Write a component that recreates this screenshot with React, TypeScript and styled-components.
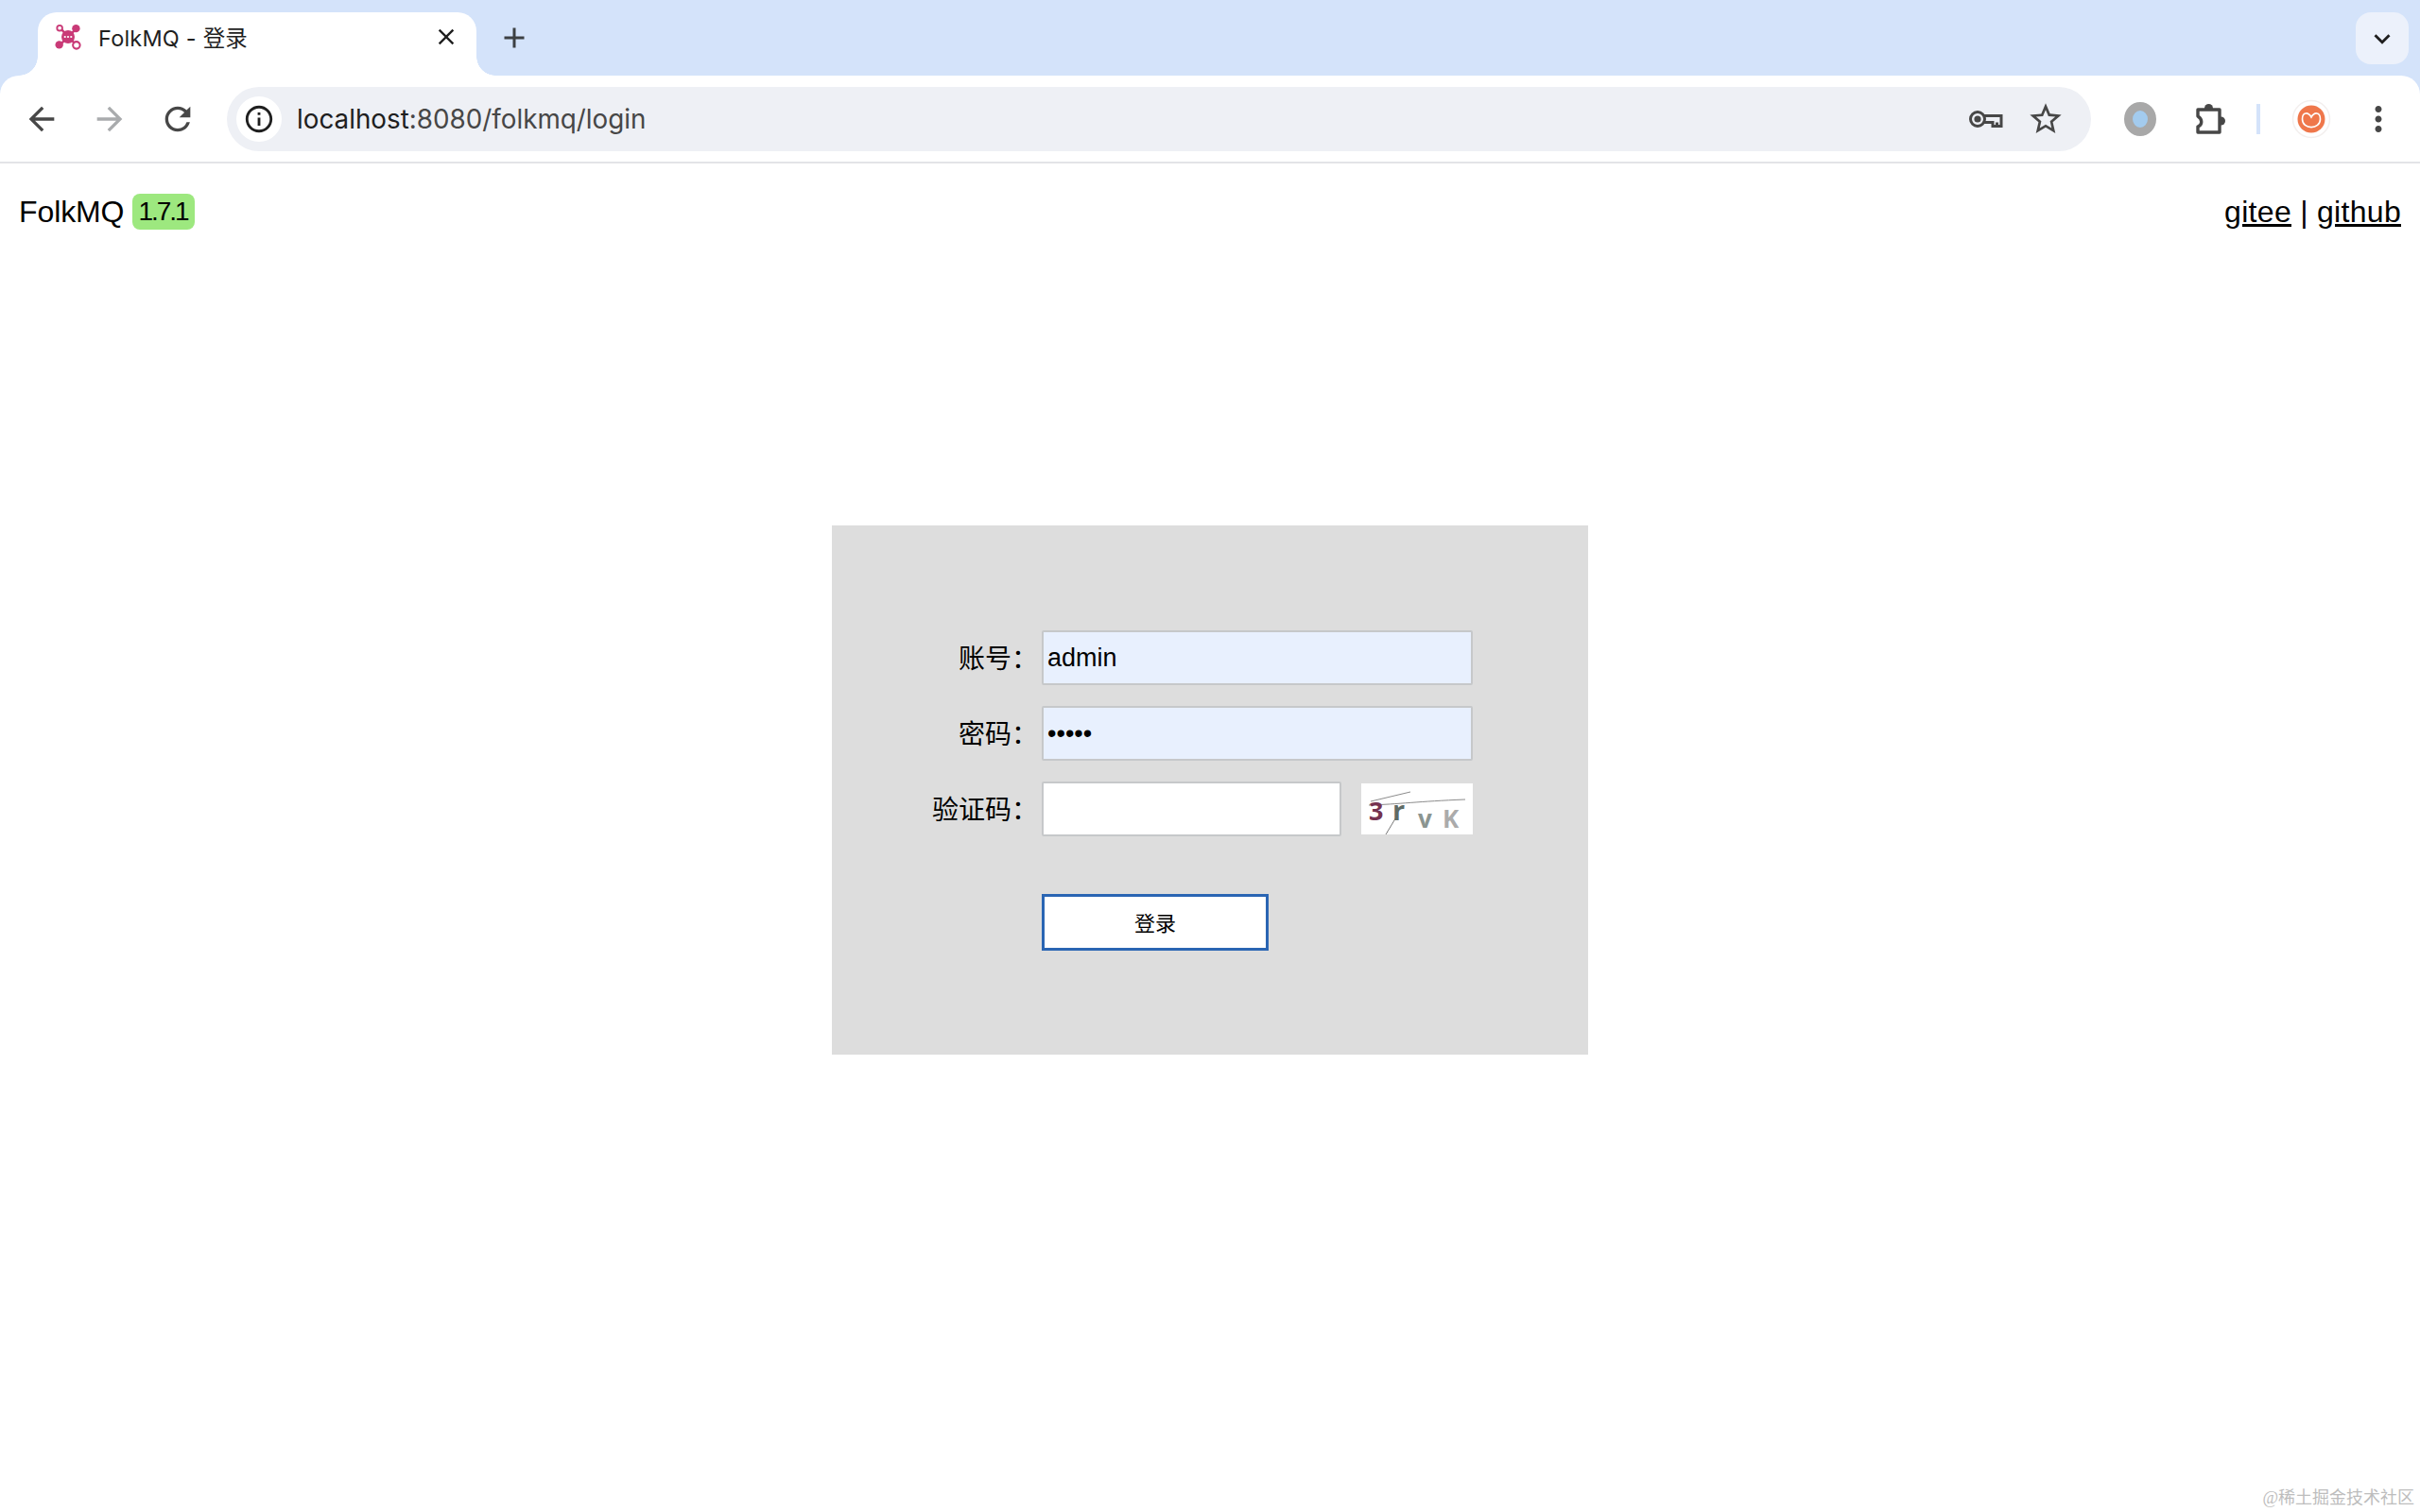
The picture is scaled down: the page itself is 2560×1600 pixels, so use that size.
import React from "react";
import styled, { createGlobalStyle } from "styled-components";
import {
  MdAdd,
  MdArrowBack,
  MdArrowForward,
  MdClose,
  MdKeyboardArrowDown,
  MdMoreVert,
  MdOutlineInfo,
  MdRefresh,
  MdStarBorder,
} from "react-icons/md";

const CJK = `"Noto Sans CJK SC"`;
const FRAME = "#d4e3fa";

const GlobalStyle = createGlobalStyle`
  html, body {
    margin: 0;
    padding: 0;
    background: #fff;
  }
  body {
    font-family: "Liberation Sans", ${CJK}, sans-serif;
    color: #000;
  }
  * {
    box-sizing: border-box;
  }
`;

const Window = styled.div`
  position: relative;
  width: 2560px;
  height: 1600px;
  overflow: hidden;
  background: #fff;
`;

// === Browser chrome ===

const TabStrip = styled.div`
  display: flex;
  align-items: flex-end;
  height: 80px;
  padding-left: 40px;
  padding-right: 12px;
  background: ${FRAME};
`;

const Tab = styled.div`
  position: relative;
  display: flex;
  align-items: center;
  width: 464px;
  height: 67px;
  padding: 0 18px 16px 18px;
  background: #fff;
  border-radius: 20px 20px 0 0;
  font-family: Inter, ${CJK}, sans-serif;
  font-size: 23.5px;
  color: #1f1f1f;

  &::before,
  &::after {
    content: "";
    position: absolute;
    bottom: 0;
    width: 20px;
    height: 20px;
    background: radial-gradient(circle at var(--cx) 0, ${FRAME} 19.5px, #fff 20px);
  }
  &::before {
    --cx: 0;
    left: -20px;
  }
  &::after {
    --cx: 100%;
    right: -20px;
  }
`;

const Favicon = styled.svg`
  flex: none;
  width: 28px;
  height: 28px;
  margin-right: 18px;
`;

const TabTitle = styled.span`
  flex: 1;
  letter-spacing: 0.2px;
  white-space: nowrap;
`;

const TabClose = styled(MdClose)`
  flex: none;
  width: 28px;
  height: 28px;
  color: #1f1f1f;
`;

const NewTab = styled(MdAdd)`
  width: 36px;
  height: 36px;
  margin: 0 0 22px 22px;
  color: #3c4043;
`;

const TabSearch = styled.div`
  display: flex;
  align-items: center;
  justify-content: center;
  width: 56px;
  height: 55px;
  margin: 0 0 12px auto;
  border-radius: 16px;
  background: #ecf1fb;
  color: #1f1f1f;
  font-size: 34px;
`;

const ToolbarBack = styled.div`
  background: ${FRAME};
`;

const Toolbar = styled.div`
  display: flex;
  align-items: center;
  height: 93px;
  padding: 0 8px;
  background: #fff;
  border-bottom: 2px solid #e3e4e7;
  border-radius: 20px 20px 0 0;
`;

const NavButton = styled.div<{ $muted?: boolean }>`
  flex: none;
  display: flex;
  align-items: center;
  justify-content: center;
  width: 72px;
  font-size: 40px;
  color: ${(p) => (p.$muted ? "#a9abad" : "#474747")};
`;

const Omnibox = styled.div`
  flex: none;
  display: flex;
  align-items: center;
  width: 1972px;
  height: 68px;
  margin-left: 16px;
  padding: 0 16px 0 10px;
  border-radius: 34px;
  background: #eef0f5;
`;

const InfoChip = styled.div`
  flex: none;
  display: flex;
  align-items: center;
  justify-content: center;
  width: 48px;
  height: 48px;
  border-radius: 50%;
  background: #fff;
  color: #1f1f1f;
  font-size: 34px;
`;

const Url = styled.span`
  flex: 1;
  margin-left: 16px;
  font-family: Inter, sans-serif;
  font-size: 27.8px;
  color: #1f1f1f;
`;

const UrlRest = styled.span`
  color: #474747;
`;

const OmniAction = styled.div`
  flex: none;
  display: flex;
  align-items: center;
  justify-content: center;
  width: 64px;
  font-size: 40px;
  color: #474747;
`;

const KeyIcon = styled.svg`
  width: 40px;
  height: 40px;
`;

const ToolSlot = styled.div<{ $width: number }>`
  flex: none;
  display: flex;
  align-items: center;
  justify-content: center;
  width: ${(p) => p.$width}px;
  font-size: 42px;
  color: #474747;
`;

const ExtensionDot = styled.div`
  width: 34px;
  height: 36px;
  border: 9px solid #a8a8a8;
  border-radius: 50%;
  background: #a3cbee;
`;

const Puzzle = styled.svg`
  flex: none;
  width: 40px;
  height: 42px;
`;

const Divider = styled.div`
  width: 4px;
  height: 32px;
  background: ${FRAME};
`;

const Avatar = styled.svg`
  flex: none;
  width: 46px;
  height: 46px;
`;

// === Page ===

const PageHeader = styled.header`
  display: flex;
  align-items: center;
  justify-content: space-between;
  height: 104px;
  padding: 0 20px 2px;
  font-size: 32px;
`;

const Brand = styled.div`
  display: flex;
  align-items: center;
  gap: 9px;
  letter-spacing: -0.1px;
`;

const Version = styled.span`
  display: inline-block;
  padding: 5px 7px 5px 6px;
  border-radius: 8px;
  background: #9de87f;
  font-size: 28px;
  line-height: 28px;
  letter-spacing: -2px;
`;

const Links = styled.div`
  white-space: pre;
  letter-spacing: 0.3px;
`;

const Link = styled.a`
  color: #000;
  text-decoration: underline;
`;

const LoginPanel = styled.main`
  width: 800px;
  height: 560px;
  margin: 279px auto 0;
  padding-top: 111px;
  background: #dddddd;
`;

const Row = styled.div<{ $gap?: number }>`
  display: flex;
  align-items: center;
  height: 58px;
  margin-bottom: ${(p) => p.$gap ?? 22}px;
`;

const Label = styled.label`
  flex: none;
  width: 218px;
  margin-right: 4px;
  padding-bottom: 2px;
  text-align: right;
  font-size: 28px;
`;

const Field = styled.input<{ $autofilled?: boolean; $width: number }>`
  width: ${(p) => p.$width}px;
  height: 58px;
  padding: 0 4px;
  border: 2px solid #c6c8ca;
  border-radius: 2px;
  outline: none;
  background: ${(p) => (p.$autofilled ? "#e8f0fe" : "#fff")};
  font-family: "Liberation Sans", sans-serif;
  font-size: 27px;
  color: #000;
`;

const Captcha = styled.svg`
  flex: none;
  width: 118px;
  height: 54px;
  margin-left: 21px;
  background: #fff;
`;

const SubmitRow = styled.div`
  padding-left: 222px;
`;

const Submit = styled.button`
  display: block;
  width: 240px;
  height: 60px;
  padding: 0 0 3px;
  border: 3px solid #2a65b3;
  background: #fff;
  font-family: "Liberation Sans", ${CJK}, sans-serif;
  font-size: 22px;
  color: #000;
`;

const Watermark = styled.div`
  position: absolute;
  right: 6px;
  bottom: 4px;
  font-family: "Liberation Serif", "Noto Sans CJK SC", serif;
  font-size: 18px;
  color: #bdbdbd;
`;

export default function App() {
  return (
    <Window>
      <GlobalStyle />
      <TabStrip>
        <Tab>
          <Favicon viewBox="0 0 30 30">
            <path d="M6 5 L24 24 M24 6 L6 24" stroke="#c93a77" strokeWidth="2.6" fill="none" />
            <circle cx="15" cy="15" r="7.5" fill="#c93a77" />
            <circle cx="24" cy="5.5" r="4.5" fill="#c93a77" />
            <circle cx="5" cy="24" r="4.5" fill="#c93a77" />
            <circle cx="5.5" cy="5" r="3" fill="#fff" stroke="#c93a77" strokeWidth="2" />
            <circle cx="24.5" cy="24.5" r="4" fill="#fff" stroke="#c93a77" strokeWidth="2.2" />
            <circle cx="11.5" cy="15" r="1.2" fill="#fff" />
            <circle cx="15" cy="15" r="1.2" fill="#fff" />
            <circle cx="18.5" cy="15" r="1.2" fill="#fff" />
          </Favicon>
          <TabTitle>FolkMQ - 登录</TabTitle>
          <TabClose />
        </Tab>
        <NewTab />
        <TabSearch>
          <MdKeyboardArrowDown />
        </TabSearch>
      </TabStrip>

      <ToolbarBack>
        <Toolbar>
          <NavButton>
            <MdArrowBack />
          </NavButton>
          <NavButton $muted>
            <MdArrowForward />
          </NavButton>
          <NavButton>
            <MdRefresh />
          </NavButton>
          <Omnibox>
            <InfoChip>
              <MdOutlineInfo />
            </InfoChip>
            <Url>
              localhost<UrlRest>:8080/folkmq/login</UrlRest>
            </Url>
            <OmniAction>
              <KeyIcon viewBox="0 0 40 40">
                <circle cx="12" cy="20" r="7.5" fill="none" stroke="#474747" strokeWidth="3" />
                <circle cx="12" cy="20" r="3.6" fill="#474747" />
                <path
                  d="M19 16.5 H37 V27.5 H28 V23.5 H19 M32.5 23.5 V27.5"
                  fill="none"
                  stroke="#474747"
                  strokeWidth="3"
                />
              </KeyIcon>
            </OmniAction>
            <OmniAction>
              <MdStarBorder />
            </OmniAction>
          </Omnibox>
          <ToolSlot $width={104}>
            <ExtensionDot />
          </ToolSlot>
          <ToolSlot $width={42}>
            <Puzzle viewBox="0 0 40 42">
              <circle cx="19.5" cy="9.5" r="4.5" fill="#474747" />
              <circle cx="32.5" cy="23" r="4.5" fill="#474747" />
              <path
                d="M8 11 H31 V35 H8 V29 C13 27 13 21 8 18 Z"
                fill="#fff"
                stroke="#474747"
                strokeWidth="3.4"
                strokeLinejoin="round"
              />
            </Puzzle>
          </ToolSlot>
          <ToolSlot $width={62}>
            <Divider />
          </ToolSlot>
          <ToolSlot $width={50}>
            <Avatar viewBox="0 0 46 46">
              <circle cx="23" cy="23" r="19.5" fill="#fff" stroke="#f3efee" strokeWidth="1.5" />
              <circle cx="23" cy="23" r="14.5" fill="#ef774b" />
              <path
                d="M13.5 23 C13.5 34.5 32.5 34.5 32.5 23 C32.5 15 26 15.5 23 21 C20 15.5 13.5 15 13.5 23 Z"
                fill="none"
                stroke="#fff"
                strokeWidth="1.6"
              />
            </Avatar>
          </ToolSlot>
          <ToolSlot $width={92}>
            <MdMoreVert />
          </ToolSlot>
        </Toolbar>
      </ToolbarBack>

      <PageHeader>
        <Brand>
          FolkMQ
          <Version>1.7.1</Version>
        </Brand>
        <Links>
          <Link href="#">gitee</Link> | <Link href="#">github</Link>
        </Links>
      </PageHeader>

      <LoginPanel>
        <Row>
          <Label>账号：</Label>
          <Field $autofilled $width={456} defaultValue="admin" />
        </Row>
        <Row>
          <Label>密码：</Label>
          <Field $autofilled $width={456} type="password" defaultValue="admin" />
        </Row>
        <Row $gap={61}>
          <Label>验证码：</Label>
          <Field $width={317} />
          <Captcha viewBox="0 0 118 54">
            <path d="M10 19 L52 9 M8 23 C40 22 60 19 110 17" stroke="#8c8c8c" strokeWidth="1" fill="none" />
            <path d="M26 54 L38 34" stroke="#777" strokeWidth="1" fill="none" />
            <text x="8" y="39" fontFamily="Open Sans" fontWeight="700" fontSize="27" fill="#74324f">3</text>
            <text x="33" y="39" fontFamily="Open Sans" fontWeight="700" fontSize="29" fill="#5f6b66">r</text>
            <text x="60" y="47" fontFamily="Open Sans" fontWeight="700" fontSize="26" fill="#8b9591">v</text>
            <text x="86" y="47" fontFamily="Open Sans" fontWeight="700" fontSize="26" fill="#ababab">K</text>
          </Captcha>
        </Row>
        <SubmitRow>
          <Submit type="button">登录</Submit>
        </SubmitRow>
      </LoginPanel>

      <Watermark>@稀土掘金技术社区</Watermark>
    </Window>
  );
}
